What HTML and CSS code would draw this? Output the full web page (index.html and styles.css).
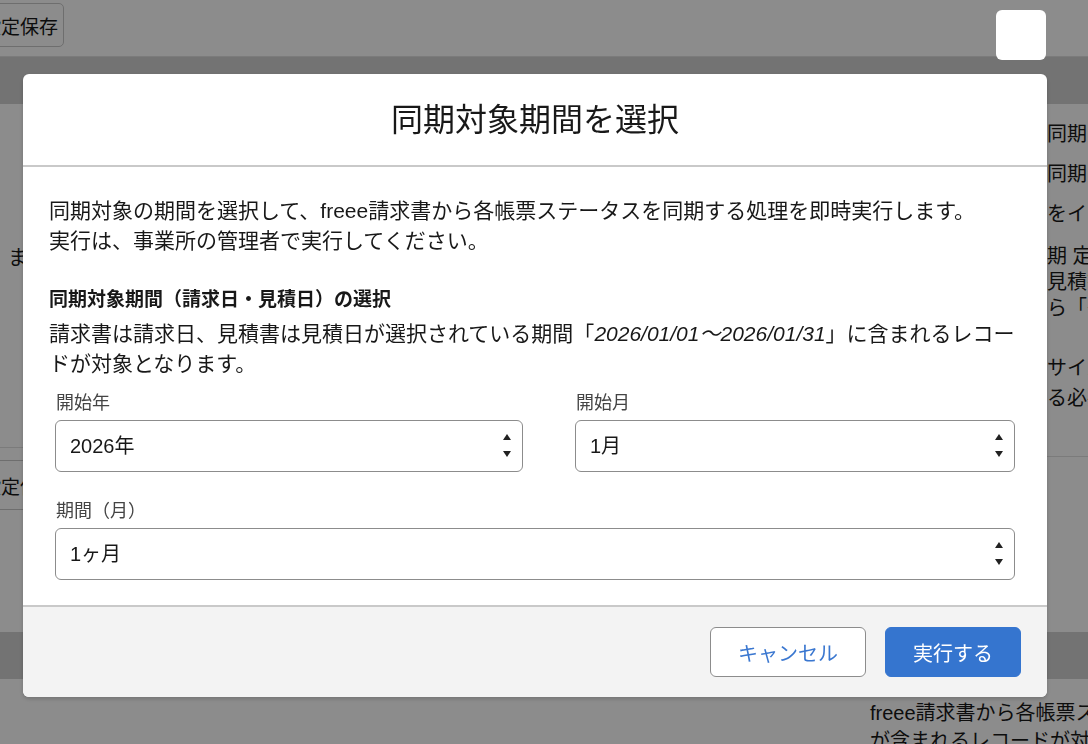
FILE: index.html
```html
<!DOCTYPE html>
<html lang="ja">
<head>
    <meta charset="UTF-8">
    <meta name="viewport" content="width=device-width, initial-scale=1.0">
    <title>同期対象期間を選択</title>
    <link rel="stylesheet" href="styles.css">
</head>
<body>
    <div class="page">
        <header class="toolbar">
            <button class="btn-save">設定保存</button>
        </header>
        <div class="band"></div>

        <main class="content">
            <section class="left-panel">
                <p class="left-text">ます</p>
                <div class="left-sep"></div>
                <button class="btn-save btn-save-low">設定保存</button>
            </section>
            <section class="right-panel">
                <p class="r1">の同期を行う</p>
                <p class="r2">の同期を行う</p>
                <p class="r3">ルをインポート</p>
                <p class="r4">同期 定期<br>、見積書<br>から「〜」</p>
                <p class="r5">をサイズ<br>する必要</p>
                <div class="right-sep"></div>
            </section>
        </main>

        <div class="band"></div>

        <section class="bottom">
            <div></div>
            <div class="bottom-text">
                <p>freee請求書から各帳票ステータスを同期</p>
                <p>が含まれるレコードが対象</p>
            </div>
        </section>
    </div>

    <div class="backdrop"></div>
    <button class="close-btn" aria-label="閉じる"></button>

    <section class="modal" role="dialog">
        <div class="modal-header">
            <h2>同期対象期間を選択</h2>
        </div>

        <div class="modal-body">
            <p class="intro">同期対象の期間を選択して、freee請求書から各帳票ステータスを同期する処理を即時実行します。<br>実行は、事業所の管理者で実行してください。</p>

            <h3 class="section-title">同期対象期間（請求日・見積日）の選択</h3>
            <p class="section-desc">請求書は請求日、見積書は見積日が選択されている期間「<em>2026/01/01〜2026/01/31</em>」に含まれるレコードが対象となります。</p>

            <div class="form-grid">
                <div class="field">
                    <label for="startYear">開始年</label>
                    <div class="select-wrap">
                        <select id="startYear">
                            <option>2025年</option>
                            <option selected>2026年</option>
                        </select>
                        <svg class="arrows" width="8" height="52" viewBox="0 0 8 52"><polygon points="0,20 4,14 8,20"/><polygon points="0,31 8,31 4,37"/></svg>
                    </div>
                </div>
                <div class="field">
                    <label for="startMonth">開始月</label>
                    <div class="select-wrap">
                        <select id="startMonth">
                            <option selected>1月</option>
                            <option>2月</option>
                        </select>
                        <svg class="arrows" width="8" height="52" viewBox="0 0 8 52"><polygon points="0,20 4,14 8,20"/><polygon points="0,31 8,31 4,37"/></svg>
                    </div>
                </div>
                <div class="field field-wide">
                    <label for="months">期間（月）</label>
                    <div class="select-wrap">
                        <select id="months">
                            <option selected>1ヶ月</option>
                            <option>3ヶ月</option>
                        </select>
                        <svg class="arrows" width="8" height="52" viewBox="0 0 8 52"><polygon points="0,20 4,14 8,20"/><polygon points="0,31 8,31 4,37"/></svg>
                    </div>
                </div>
            </div>
        </div>

        <div class="modal-footer">
            <button class="btn btn-neutral">キャンセル</button>
            <button class="btn btn-brand">実行する</button>
        </div>
    </section>
</body>
</html>
```

FILE: styles.css
```css
html, body {
    margin: 0;
    height: 100%;
    overflow: hidden;
}

body {
    font-family: "Liberation Sans", "Noto Sans CJK JP", sans-serif;
    color: #181818;
    background-color: #fff;
}

p {
    margin: 0;
}

/* page behind the dialog */
.page {
    height: 744px;
    display: flex;
    flex-direction: column;
}

.toolbar {
    height: 57px;
    box-sizing: border-box;
    border-bottom: 1px solid #e0e0e0;
    padding-top: 3px;
}

.btn-save {
    display: block;
    margin-left: -24px;
    height: 44px;
    padding: 0 5px;
    font-family: inherit;
    font-size: 19px;
    color: #181818;
    background-color: #fff;
    border: 1px solid #c9c9c9;
    border-radius: 5px;
}

.band {
    height: 47px;
    background-color: #d1d1d1;
}

.content {
    height: 528px;
    display: grid;
    grid-template-columns: 1fr 61px;
    font-size: 20px;
    white-space: nowrap;
}

.left-panel {
    display: flex;
    flex-direction: column;
    align-items: flex-start;
    overflow: hidden;
}

.left-text {
    margin: 139px 0 0 8px;
    line-height: 30px;
}

.left-sep {
    align-self: stretch;
    margin-top: 174px;
    border-top: 1px solid #e0e0e0;
}

.btn-save-low {
    margin-top: 12px;
    height: 50px;
}

.right-panel {
    overflow: hidden;
    line-height: 30px;
}

.r1 { margin-top: 15px; }
.r2, .r3 { margin-top: 10px; }
.r4 { margin-top: 14px; line-height: 26px; }
.r5 { margin-top: 32px; }

.right-sep {
    margin-top: 43px;
    border-top: 1px solid #e0e0e0;
}

.bottom {
    flex: 1;
    display: grid;
    grid-template-columns: 870px 1fr;
    overflow: hidden;
    white-space: nowrap;
}

.bottom-text {
    padding-top: 20px;
    font-size: 20px;
    line-height: 28px;
}

/* overlay */
.backdrop {
    position: fixed;
    inset: 0;
    background-color: rgba(0, 0, 0, 0.45);
}

.close-btn {
    position: fixed;
    top: 10px;
    left: 996px;
    width: 50px;
    height: 50px;
    padding: 0;
    border: none;
    border-radius: 6px;
    background-color: #fff;
}

/* dialog */
.modal {
    position: fixed;
    top: 74px;
    left: 23px;
    width: 1024px;
    background-color: #fff;
    border-radius: 6px;
    box-shadow: 0 2px 4px rgba(0, 0, 0, 0.18);
    overflow: hidden;
}

.modal-header {
    height: 91px;
    display: flex;
    align-items: center;
    justify-content: center;
    border-bottom: 2px solid #c9c9c9;
}

.modal-header h2 {
    margin: 0;
    font-size: 32px;
    font-weight: 400;
    line-height: 40px;
}

.modal-body {
    padding: 29px 26px 25px;
}

.intro {
    font-size: 21px;
    line-height: 30px;
}

.section-title {
    margin: 31px 0 0;
    font-size: 19px;
    line-height: 26px;
    font-weight: 700;
}

.section-desc {
    margin-top: 6px;
    font-size: 21px;
    line-height: 30px;
}

.form-grid {
    margin-top: 12px;
    padding: 0 6px;
    display: grid;
    grid-template-columns: 468px 1fr;
    column-gap: 52px;
    row-gap: 27px;
}

.field-wide {
    grid-column: 1 / -1;
}

.field label {
    display: block;
    padding-left: 1px;
    font-size: 18px;
    line-height: 24px;
    color: #444;
}

.select-wrap {
    position: relative;
    margin-top: 5px;
}

.select-wrap select {
    display: block;
    width: 100%;
    height: 52px;
    padding: 0 30px 0 14px;
    font-family: inherit;
    font-size: 20px;
    color: #181818;
    background-color: #fff;
    border: 1px solid #8c8c8c;
    border-radius: 6px;
    appearance: none;
    -webkit-appearance: none;
}

.arrows {
    position: absolute;
    top: 0;
    right: 12px;
    fill: #222;
    pointer-events: none;
}

.modal-footer {
    height: 92px;
    box-sizing: border-box;
    border-top: 2px solid #c9c9c9;
    background-color: #f3f3f3;
    display: flex;
    align-items: center;
    justify-content: flex-end;
    gap: 19px;
    padding: 0 26px 0 0;
}

.btn {
    height: 50px;
    font-family: inherit;
    font-size: 20px;
    border-radius: 6px;
    cursor: pointer;
}

.btn-neutral {
    width: 156px;
    color: #3a77d0;
    background-color: #fff;
    border: 1px solid #8c8c8c;
}

.btn-brand {
    width: 136px;
    color: #fff;
    background-color: #3575cf;
    border: 1px solid #3575cf;
}
```
